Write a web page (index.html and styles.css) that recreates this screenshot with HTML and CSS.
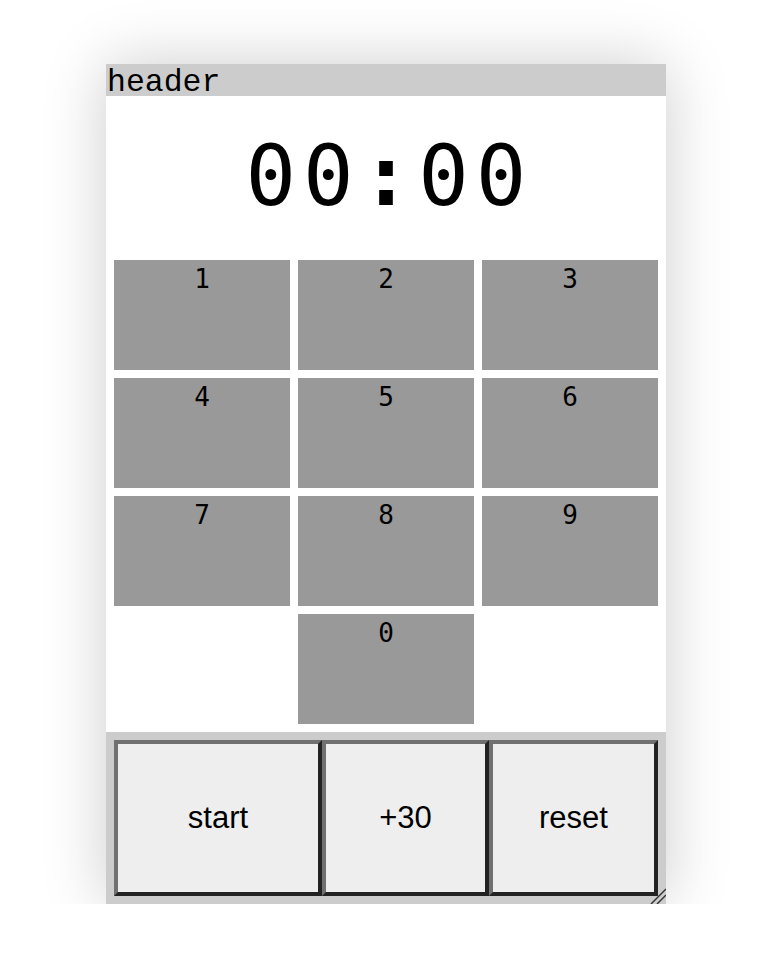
FILE: index.html
```html
<!DOCTYPE html>
<html>
<head>
<meta charset="utf-8">
<link rel="stylesheet" href="styles.css">
</head>
<body>
<div class="panel">
  <div class="header">header</div>
  <div class="timer">00<span class="colon">:</span>00</div>
  <div class="keypad">
    <div class="key">1</div>
    <div class="key">2</div>
    <div class="key">3</div>
    <div class="key">4</div>
    <div class="key">5</div>
    <div class="key">6</div>
    <div class="key">7</div>
    <div class="key">8</div>
    <div class="key">9</div>
    <div class="key key-zero">0</div>
  </div>
  <div class="controls">
    <button class="ctrl">start</button>
    <button class="ctrl">+30</button>
    <button class="ctrl">reset</button>
  </div>
  <svg class="grip" width="16" height="16" viewBox="0 0 16 16">
    <line x1="1" y1="16" x2="16" y2="1" stroke="#333" stroke-width="1.5"/>
    <line x1="7" y1="16" x2="16" y2="7" stroke="#333" stroke-width="1.5"/>
  </svg>
</div>
</body>
</html>
```

FILE: styles.css
```css
html, body {
  margin: 0;
  padding: 0;
  background: #fff;
}

.panel {
  position: relative;
  width: 560px;
  margin: 64px 0 0 106px;
  background: #fff;
  box-shadow: 0 0 60px rgba(0, 0, 0, 0.2);
  display: flex;
  flex-direction: column;
}

.header {
  height: 32px;
  box-sizing: border-box;
  padding-top: 3px;
  background: #ccc;
  font-family: "Liberation Mono", "Courier New", monospace;
  font-size: 31.5px;
  line-height: 32px;
  color: #000;
  padding-left: 1px;
}

.timer {
  height: 156px;
  display: flex;
  align-items: center;
  justify-content: center;
  font-family: "DejaVu Sans Mono", monospace;
  font-size: 84px;
  letter-spacing: 7px;
  padding-left: 7px;
  padding-top: 4px;
  box-sizing: border-box;
  color: #000;
}

.colon {
  font-weight: bold;
}

.keypad {
  display: grid;
  grid-template-columns: repeat(3, 176px);
  grid-auto-rows: 110px;
  gap: 8px;
  padding: 8px;
}

.key {
  background: #999;
  text-align: center;
  font-family: "DejaVu Sans Mono", monospace;
  font-size: 26px;
  line-height: 30px;
  padding-top: 4px;
  box-sizing: border-box;
  color: #000;
}

.key-zero {
  grid-column: 2;
}

.controls {
  display: grid;
  grid-template-columns: 208px 167px 169px;
  background: #ccc;
  padding: 8px;
}

.ctrl {
  height: 156px;
  margin: 0;
  background: #eee;
  border-style: solid;
  border-width: 4px;
  border-color: #707070 #222 #222 #707070;
  font-family: "Liberation Sans", Arial, sans-serif;
  font-size: 31px;
  color: #000;
  padding: 0;
}

.grip {
  position: absolute;
  right: 0;
  bottom: 0;
  display: block;
}
```
